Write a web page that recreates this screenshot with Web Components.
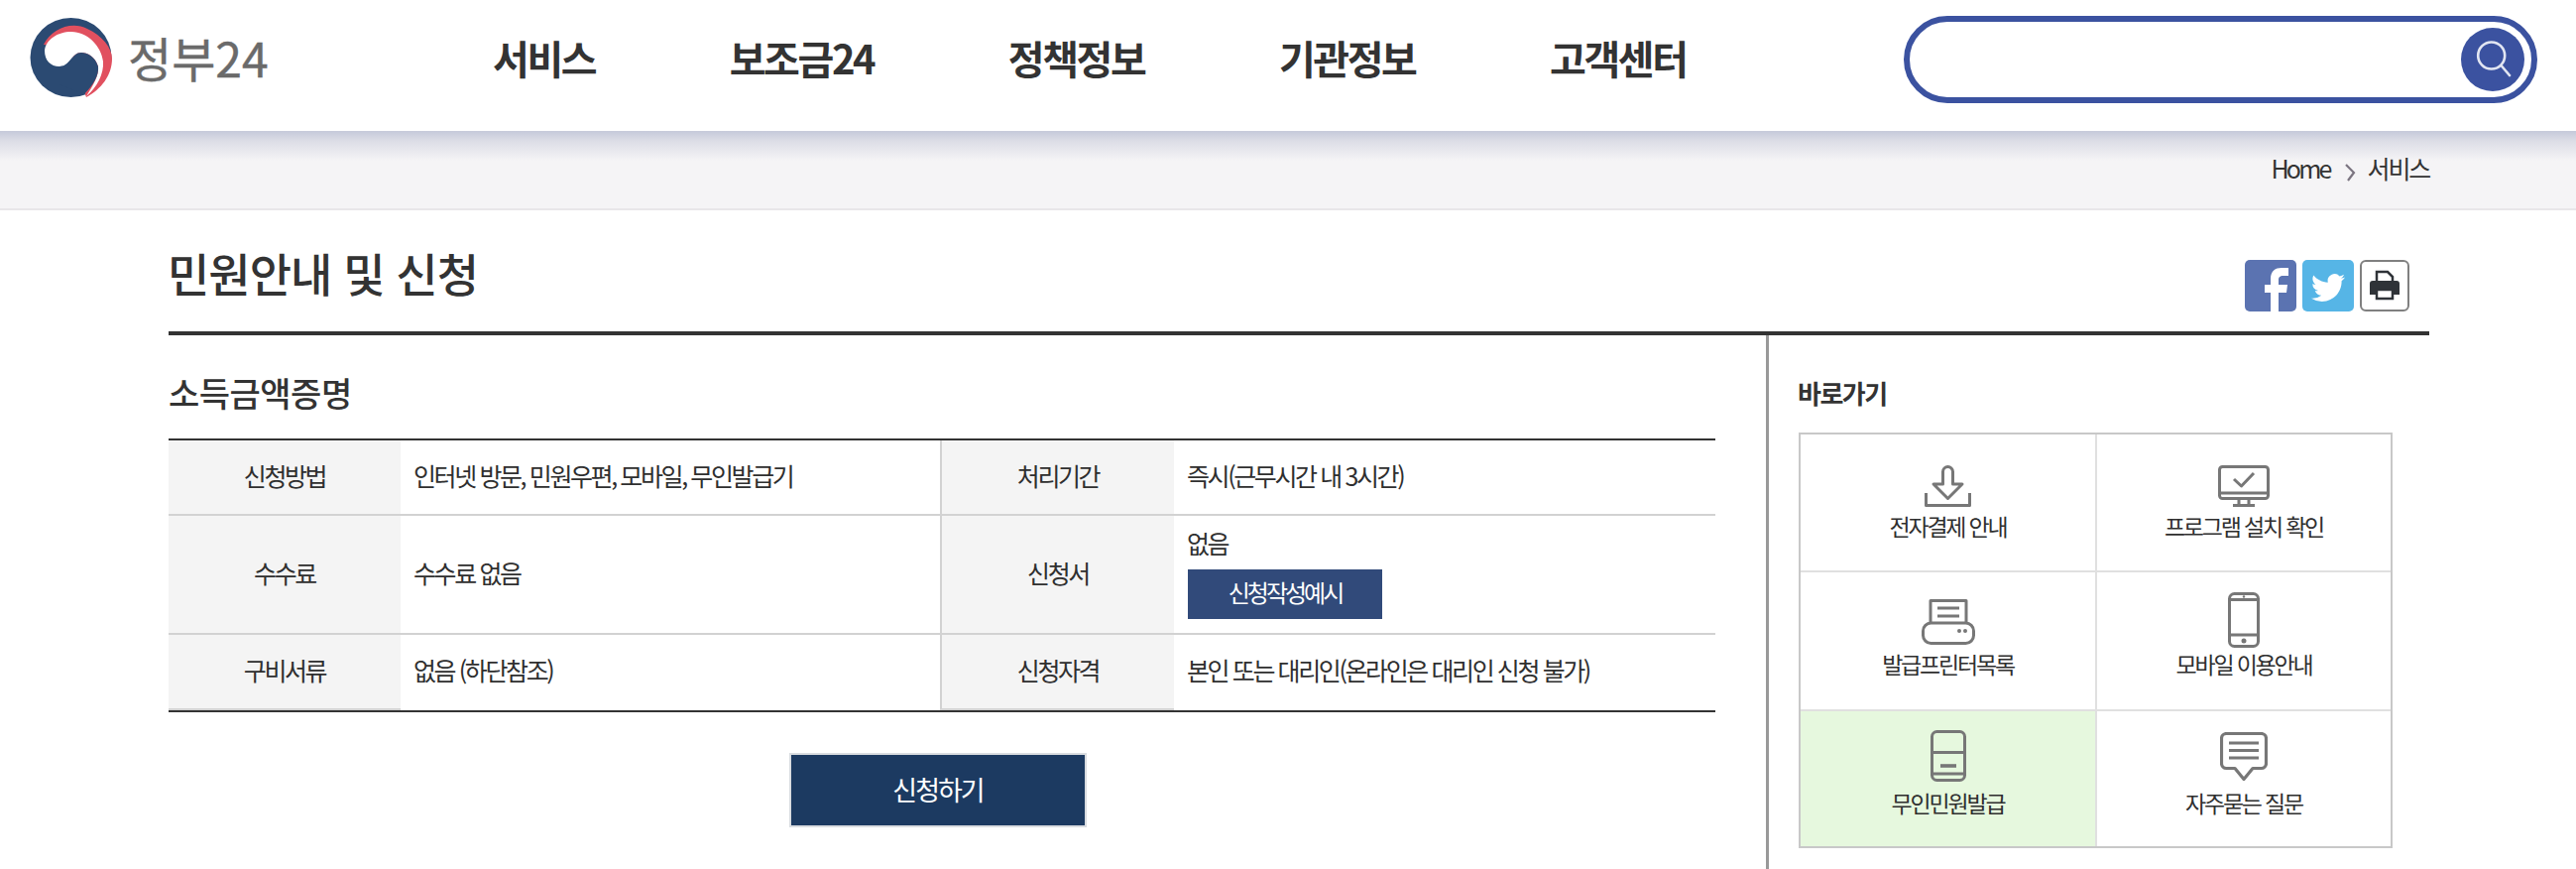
<!DOCTYPE html>
<html lang="ko">
<head>
<meta charset="utf-8">
<title>정부24</title>
<style>
  html, body { margin: 0; padding: 0; background: #fff; overflow: hidden; }
  body { font-family: "Noto Sans CJK KR", "Noto Sans", sans-serif; color: #333; }
</style>
</head>
<body>
<gov-header>
  <a slot="nav">서비스</a>
  <a slot="nav">보조금24</a>
  <a slot="nav">정책정보</a>
  <a slot="nav">기관정보</a>
  <a slot="nav">고객센터</a>
</gov-header>
<gov-crumbs></gov-crumbs>
<page-head>민원안내 및 신청</page-head>
<page-columns>
  <info-table title="소득금액증명">
    <info-cell head>신청방법</info-cell>
    <info-cell>인터넷 방문, 민원우편, 모바일, 무인발급기</info-cell>
    <info-cell head divide>처리기간</info-cell>
    <info-cell>즉시(근무시간 내 3시간)</info-cell>
    <info-cell head>수수료</info-cell>
    <info-cell>수수료 없음</info-cell>
    <info-cell head divide>신청서</info-cell>
    <info-cell>
      <span>없음</span>
      <small-button>신청작성예시</small-button>
    </info-cell>
    <info-cell head last>구비서류</info-cell>
    <info-cell>없음 (하단참조)</info-cell>
    <info-cell head divide last>신청자격</info-cell>
    <info-cell>본인 또는 대리인(온라인은 대리인 신청 불가)</info-cell>
  </info-table>
  <side-links slot="side" title="바로가기">
    <link-cell label="전자결제 안내">
      <svg width="47" height="42" viewBox="0 0 47 42" fill="none" stroke="#777" stroke-width="3" stroke-linejoin="round">
        <path d="M18.500 19V6.500a5 5 0 0 1 10 0V19H38L23.500 33.500 9 19z"/>
        <path d="M1.500 28v12.500h44V28"/>
      </svg>
    </link-cell>
    <link-cell label="프로그램 설치 확인">
      <svg width="52" height="42" viewBox="0 0 52 42" fill="none" stroke="#777" stroke-width="3" stroke-linejoin="round">
        <rect x="1.500" y="1.500" width="49" height="32" rx="3"/>
        <path d="M1.500 28h49"/>
        <path d="M16 14l7.500 7L36 8"/>
        <path d="M21 34v6M31 34v6M15 40.500h22"/>
      </svg>
    </link-cell>
    <link-cell label="발급프린터목록">
      <svg width="54" height="46" viewBox="0 0 54 46" fill="none" stroke="#777" stroke-width="3" stroke-linejoin="round">
        <path d="M9 24V1.500h36V24"/>
        <rect x="1.500" y="24" width="51" height="20.500" rx="8"/>
        <path d="M16 9h22M16 17h22"/>
        <circle cx="38" cy="32" r="2" fill="#777" stroke="none"/>
        <circle cx="44" cy="32" r="2" fill="#777" stroke="none"/>
      </svg>
    </link-cell>
    <link-cell label="모바일 이용안내" style="--drop:-3px">
      <svg width="32" height="56" viewBox="0 0 32 56" fill="none" stroke="#777" stroke-width="3">
        <rect x="1.500" y="1.500" width="29" height="53" rx="5"/>
        <path d="M1.500 7.500h29M1.500 43h29"/>
        <circle cx="16" cy="49" r="2.500" fill="#777" stroke="none"/>
        <circle cx="16" cy="4.500" r="1.200" fill="#777" stroke="none"/>
      </svg>
    </link-cell>
    <link-cell label="무인민원발급" active style="--drop:2px">
      <svg width="36" height="52" viewBox="0 0 36 52" fill="none" stroke="#777" stroke-width="3">
        <rect x="1.500" y="1.500" width="33" height="49" rx="5"/>
        <path d="M1.500 22.500h33M1.500 44h33"/>
        <path d="M10 36h16" stroke-width="3.600"/>
      </svg>
    </link-cell>
    <link-cell label="자주묻는 질문" style="--drop:2px">
      <svg width="48" height="50" viewBox="0 0 48 50" fill="none" stroke="#777" stroke-width="3.200" stroke-linejoin="round">
        <path d="M6.500 1.500h35a5 5 0 0 1 5 5v25a5 5 0 0 1-5 5H33l-9 11-9-11H6.500a5 5 0 0 1-5-5v-25a5 5 0 0 1 5-5z"/>
        <path d="M9 11h30M9 18.500h30M9 26h30"/>
      </svg>
    </link-cell>
  </side-links>
</page-columns>

<script>
// shared helper: attach an open shadow root from a template string
function shadow(el, html) {
  const template = document.createElement('template');
  template.innerHTML = html;
  el.attachShadow({ mode: 'open' }).appendChild(template.content.cloneNode(true));
}

class GovHeader extends HTMLElement {
  constructor() {
    super();
    shadow(this, `
      <style>
        :host { display: flex; align-items: flex-start; height: 132px; background: #fff; }
        .logo { display: flex; width: 242px; margin: 18px 0 0 30px; flex: none; }
        .logo span {
          margin-left: 15px; margin-top: 8px; font-size: 48px; line-height: 62px;
          color: #6a6a6a; letter-spacing: 0; white-space: nowrap; -webkit-text-stroke: .4px #6a6a6a;
        }
        nav { display: flex; gap: 135.500px; margin: 28px 0 0 225px; }
        ::slotted(a) {
          font-size: 40px; line-height: 60px; font-weight: 700; color: #333;
          letter-spacing: -2.400px; white-space: nowrap;
        }
        .search {
          box-sizing: border-box; width: 639px; height: 88px; margin: 16px 39px 0 auto;
          border: 6px solid #3b52a0; border-radius: 44px; display: flex;
          justify-content: flex-end; align-items: center; padding-right: 7px; flex: none;
        }
        .go { width: 64px; height: 64px; border-radius: 50%; background: #3b52a0; display: block; }
      </style>
      <div class="logo">
        <svg width="84" height="80" viewBox="0 0 84 80">
          <ellipse cx="41.500" cy="40" rx="41" ry="40" fill="#2b4a72"/>
          <path fill="#e1505f" d="M14 27C22 11 42 3 58 11c15 7 25 19 25 30 0 17-11 31-26 39l-7-20-10-30z"/>
          <path fill="#fff" d="M15 33c1-11 13-19 27-19 16 0 30 14 32 30 1 12-6 26-17 35 7-11 13-21 12-30-3-10-11-14-17-14-10 0-11 14-22 14-9 0-15-6-15-16z"/>
          <path fill="#2b4a72" d="M52 35c6 0 14 4 17 14 1 9-5 19-14 28l-25-10V49c11 0 12-14 22-14z"/>
        </svg>
        <span>정부24</span>
      </div>
      <nav><slot name="nav"></slot></nav>
      <div class="search">
        <svg class="go" viewBox="0 0 64 64" fill="none" stroke="#e2e6f2" stroke-width="2.600">
          <circle cx="30.700" cy="28" r="13.500"/>
          <path d="M40.500 38l8.500 10" stroke-linecap="round"/>
        </svg>
      </div>
    `);
  }
}

class GovCrumbs extends HTMLElement {
  constructor() {
    super();
    shadow(this, `
      <style>
        :host {
          display: flex; box-sizing: border-box; height: 80px; padding: 17px 148px 0 0;
          justify-content: flex-end; align-items: flex-start;
          background: linear-gradient(#c5c9da, #dcdde6 10px, #f5f4f6 30px);
          border-bottom: 2px solid #e8e6e9;
          font-size: 25px; line-height: 40px; color: #333; letter-spacing: -2.200px;
        }
        .home { letter-spacing: -2.800px; }
        svg { margin: 16px 12px 0 14px; }
      </style>
      <span class="home">Home</span>
      <svg width="12" height="18" viewBox="0 0 12 18" fill="none" stroke="#7b7480" stroke-width="2.200"><path d="M2 1l8 8-6 8"/></svg>
      <span>서비스</span>
    `);
  }
}

class PageHead extends HTMLElement {
  constructor() {
    super();
    shadow(this, `
      <style>
        :host {
          display: flex; box-sizing: border-box; height: 126px; margin: 0 148px 0 170px;
          border-bottom: 4px solid #333; justify-content: space-between;
        }
        h1 {
          margin: 30px 0 0 -1px; font-size: 46px; line-height: 64px; font-weight: 500;
          color: #333; letter-spacing: -1px;
        }
        .share { display: flex; gap: 6px; margin: 50px 20px 0 0; }
        .share > * { display: block; width: 52px; height: 52px; }
        .share > .print { box-sizing: border-box; width: 50px; border: 2px solid #808080; border-radius: 6px; background: #fff; }
      </style>
      <h1><slot></slot></h1>
      <div class="share">
        <svg viewBox="0 0 52 52">
          <rect width="52" height="52" rx="5" fill="#5b73b1"/>
          <path fill="#fff" d="M26 52V33h-6v-8h6v-6c0-8 5-11 11-11h7v8h-5c-4 0-5 2-5 4v5h9l-1 8h-8v19z"/>
        </svg>
        <svg viewBox="0 0 52 52">
          <rect width="52" height="52" rx="5" fill="#56b5e6"/>
          <g transform="translate(9 11) scale(1.420)">
            <path fill="#fff" d="M23.953 4.570a10 10 0 0 1-2.825.775 4.958 4.958 0 0 0 2.163-2.723c-.951.555-2.005.959-3.127 1.184a4.920 4.920 0 0 0-8.384 4.482C7.690 8.095 4.067 6.130 1.640 3.162a4.822 4.822 0 0 0-.666 2.475c0 1.710.870 3.213 2.188 4.096a4.904 4.904 0 0 1-2.228-.616v.060a4.923 4.923 0 0 0 3.946 4.827 4.996 4.996 0 0 1-2.212.085 4.936 4.936 0 0 0 4.604 3.417 9.867 9.867 0 0 1-6.102 2.105c-.390 0-.779-.023-1.170-.067a13.995 13.995 0 0 0 7.557 2.209c9.053 0 13.998-7.496 13.998-13.985 0-.210 0-.420-.015-.630A9.935 9.935 0 0 0 24 4.590z"/>
          </g>
        </svg>
        <svg class="print" viewBox="0 0 46 48">
          <path d="M15 20V10h11l5 5v5" fill="none" stroke="#2f3338" stroke-width="2.500"/>
          <path fill="#2f3338" d="M11 19h24a3 3 0 0 1 3 3v11H8V22a3 3 0 0 1 3-3z"/>
          <rect x="15" y="28" width="16" height="9" fill="#fff" stroke="#2f3338" stroke-width="2.500"/>
        </svg>
      </div>
    `);
  }
}

class PageColumns extends HTMLElement {
  constructor() {
    super();
    shadow(this, `
      <style>
        :host { display: flex; margin-left: 170px; min-height: 538px; }
        .main { box-sizing: border-box; width: 1611px; flex: none; }
        .side { box-sizing: border-box; border-left: 3px solid #999; padding-left: 29px; flex: none; }
      </style>
      <div class="main"><slot></slot></div>
      <div class="side"><slot name="side"></slot></div>
    `);
  }
}

class InfoTable extends HTMLElement {
  constructor() {
    super();
    shadow(this, `
      <style>
        :host { display: block; width: 1560px; }
        h2 {
          margin: 0; padding-top: 33px; height: 71px; font-size: 34px; line-height: 50px;
          font-weight: 500; color: #333; letter-spacing: -.5px;
        }
        .grid {
          display: grid; grid-template-columns: 234px 544px 236px 546px;
          grid-template-rows: 76px 120px 76px;
          border-top: 2px solid #333; border-bottom: 2px solid #333;
        }
        .apply {
          display: block; box-sizing: border-box; width: 300px; height: 75px; margin: 41px 0 0 626px;
          border: 2px solid #d9dce0; background: #1c3a61; color: #fff; text-align: center;
          font-size: 27px; line-height: 69px; letter-spacing: -2px;
        }
      </style>
      <h2></h2>
      <div class="grid"><slot></slot></div>
      <div class="apply">신청하기</div>
    `);
  }
  connectedCallback() {
    this.shadowRoot.querySelector('h2').textContent = this.getAttribute('title');
  }
}

class InfoCell extends HTMLElement {
  constructor() {
    super();
    shadow(this, `
      <style>
        :host {
          display: flex; flex-direction: column; justify-content: center; align-items: flex-start;
          box-sizing: border-box; padding: 0 0 5px 13px; border-bottom: 2px solid #d2d2d2;
          font-size: 25px; line-height: 36px; color: #2f2f2f; letter-spacing: -2.400px;
        }
        :host([head]) { background: #f4f4f4; padding-left: 0; align-items: center; }
        :host([divide]) { border-left: 2px solid #d2d2d2; }
        :host(:nth-last-child(-n+4):not([head])) { border-bottom: 0; padding-bottom: 7px; }
      </style>
      <slot></slot>
    `);
  }
}

class SmallButton extends HTMLElement {
  constructor() {
    super();
    shadow(this, `
      <style>
        :host {
          display: block; width: 196px; height: 50px; margin: 9px 0 0 1px; background: #314a7a;
          color: #fff; font-size: 24px; line-height: 46px; text-align: center; letter-spacing: -3px;
        }
      </style>
      <slot></slot>
    `);
  }
}

class SideLinks extends HTMLElement {
  constructor() {
    super();
    shadow(this, `
      <style>
        :host { display: block; }
        h3 {
          margin: 0; height: 98px; padding-top: 38px; box-sizing: border-box; font-size: 26px;
          line-height: 40px; font-weight: 700; color: #333; letter-spacing: -1.500px;
        }
        .grid {
          display: grid; box-sizing: border-box; width: 599px; height: 419px; margin-left: 1px;
          grid-template-columns: 299px 1fr; grid-template-rows: 139px 140px 1fr;
          border: 2px solid #c8c8c8;
        }
      </style>
      <h3></h3>
      <div class="grid"><slot></slot></div>
    `);
  }
  connectedCallback() {
    this.shadowRoot.querySelector('h3').textContent = this.getAttribute('title');
  }
}

class LinkCell extends HTMLElement {
  constructor() {
    super();
    shadow(this, `
      <style>
        :host {
          display: flex; flex-direction: column; align-items: center; box-sizing: border-box;
          border-right: 2px solid #e0e0e0; border-bottom: 2px solid #e0e0e0;
          font-size: 23px; line-height: 36px; color: #2f2f2f; letter-spacing: -2.200px;
        }
        :host(:nth-child(even)) { border-right: 0; }
        :host(:nth-last-child(-n+2)) { border-bottom: 0; }
        :host([active]) { background: #e6f8de; }
        .icon { height: 73px; display: flex; align-items: flex-end; }
        ::slotted(svg) { display: block; margin-bottom: var(--drop, 0); }
        .label { margin-top: 1px; }
      </style>
      <div class="icon"><slot></slot></div>
      <div class="label"></div>
    `);
  }
  connectedCallback() {
    this.shadowRoot.querySelector('.label').textContent = this.getAttribute('label');
  }
}

customElements.define('gov-header', GovHeader);
customElements.define('gov-crumbs', GovCrumbs);
customElements.define('page-head', PageHead);
customElements.define('page-columns', PageColumns);
customElements.define('info-table', InfoTable);
customElements.define('info-cell', InfoCell);
customElements.define('small-button', SmallButton);
customElements.define('side-links', SideLinks);
customElements.define('link-cell', LinkCell);
</script>
</body>
</html>
